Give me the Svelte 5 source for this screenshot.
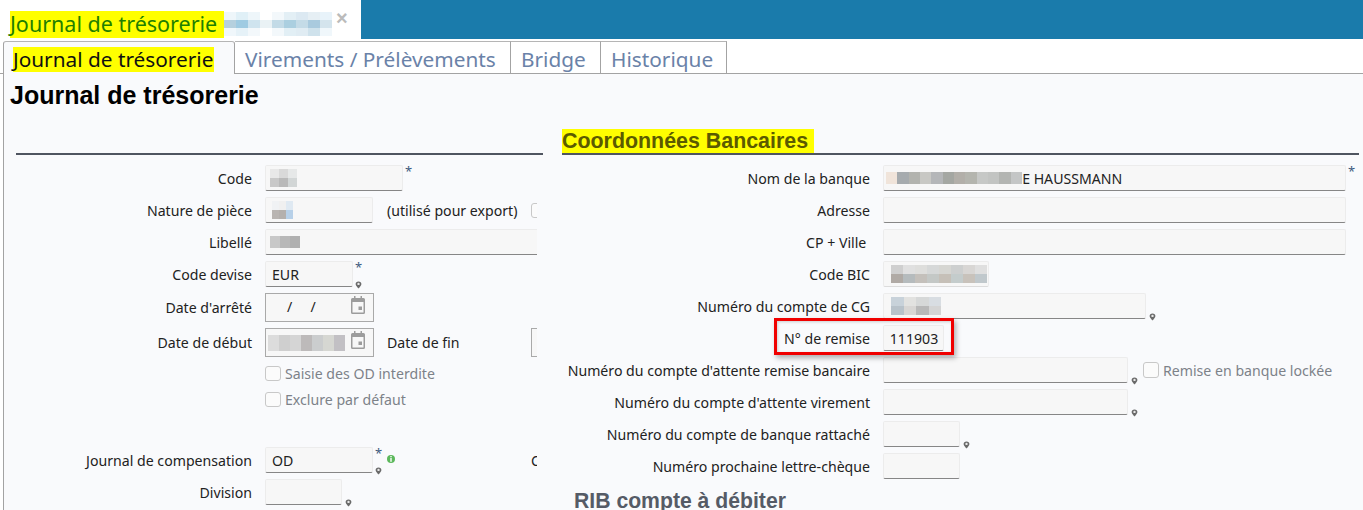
<script>
  const titleBlur = {
    cols: 9, w: 12, h: 8,
    c: ['#eef6fa','#e0f0f7','#eef6fa','#fff','#f3f8fb','#e3eff5','#dce9f2','#e6eff4','#e8f3fa',
        '#b5d0de','#9fcbe2','#cfe4ef','#eaf2f5','#c3dbe7','#abcfe0','#c4dbe7','#a9cade','#d4e4ed',
        '#f0f7fb','#e6f2f8','#f3f8fb','#fff','#f3f8fb','#e2eff5','#e0ecf3','#cfe2ec','#f0f7fb']
  };
  const codeBlur = { cols: 3, w: 9, h: 9, c: ['#e8e8e8','#d9d9d9','#e6e8e8','#c8c8c8','#b9b9b9','#d2d6d6'] };
  const natureBlur = { cols: 3, w: 7, h: 9, c: ['#f0f2f4','#f0f0f0','#dfe9f2','#b9b5b2','#b4b0ad','#b7d0e8'] };
  const libBlur = { cols: 3, w: 10, h: 12, c: ['#c8c8c8','#b8b8b8','#b0b0b0'] };
  const debutBlur = { cols: 7, w: 11, h: 16, c: ['#dcdcdc','#cfcfcf','#d5d5d5','#bdbaba','#cbcdce','#d6d7d2','#c2c0c4'] };
  const bankBlur = { cols: 12, w: 11.35, h: 12, c: ['#f0e4da','#a6abae','#b2b3ae','#c8c8c4','#b4b6b8','#a4a7a2','#b2afa9','#b4b5ae','#c6c8c6','#c2c4c2','#b3b5b2','#c4c6c6'] };
  const bicBlur = {
    cols: 8, w: 12, h: 9,
    c: ['#cfcfcf','#e0e0e0','#dededc','#d6d8d8','#d6d6d2','#cdcfcf','#d8d6d4','#dfdfdf',
        '#b0aaa5','#b5bbbd','#c4c0bb','#c4c8c6','#c6c0b8','#c4cccc','#c8c2bb','#c0c8cc']
  };
  const cgBlur = {
    cols: 4, w: 12.5, h: 9,
    c: ['#c8d2da','#e2e2e0','#d6d8d8','#d8dde2',
        '#b8c2ca','#d8d6d4','#b8b8b8','#d4d4d4']
  };

  const tabs = ['Virements / Prélèvements', 'Bridge', 'Historique'];
</script>

{#snippet blur(b)}
  <span class="blur" style="grid-template-columns: repeat({b.cols}, {b.w}px); grid-auto-rows: {b.h}px">
    {#each b.c as color}<i style="background: {color}"></i>{/each}
  </span>
{/snippet}

{#snippet pin()}
  <svg class="pin" width="7" height="8" viewBox="0 0 7 8" aria-hidden="true">
    <path d="M3.5 .4C1.7 .4.6 1.6.6 3c0 1.2 1.2 2.9 2.9 4.6C5.200 5.900 6.400 4.200 6.400 3 6.400 1.600 5.300.4 3.500.4Z" fill="#6a6a6a"/>
    <circle cx="3.500" cy="2.900" r="1.200" fill="#e8e8e8"/>
  </svg>
{/snippet}

{#snippet calendar()}
  <svg class="cal" width="14" height="18" viewBox="0 0 14 18" aria-hidden="true">
    <path d="M3 0h1.500v2h5V0H11v2h1.500A1.500 1.500 0 0 1 14 3.500v13a1.500 1.500 0 0 1-1.500 1.500h-11A1.500 1.500 0 0 1 0 16.500v-13A1.500 1.500 0 0 1 1.500 2H3Z" fill="#9c9c9c"/>
    <rect x="1.500" y="6" width="11" height="10.500" fill="#f7f7f7"/>
    <rect x="7.500" y="10.500" width="3.500" height="3.500" fill="#9c9c9c"/>
  </svg>
{/snippet}

<div class="page">
  <header class="topbar">
    <div class="doc">
      <span class="doc-title"><mark>Journal de trésorerie</mark></span>
      <span class="doc-blur">{@render blur(titleBlur)}</span>
      <span class="close">×</span>
    </div>
  </header>

  <nav class="tabs">
    <div class="tab active"><mark>Journal de trésorerie</mark></div>
    {#each tabs as t}<div class="tab">{t}</div>{/each}
  </nav>

  <main class="panel">
    <h1>Journal de trésorerie</h1>
    <div class="columns">
      <section class="col left">
        <h2 class="sec"></h2>
        <div class="rows">
          <div class="row">
            <label>Code</label>
            <span class="input w138">{@render blur(codeBlur)}</span>
            <span class="adorn"><b class="req">*</b></span>
          </div>
          <div class="row">
            <label>Nature de pièce</label>
            <span class="ctl"><span class="input w108">{@render blur(natureBlur)}</span></span>
            <span class="extra">(utilisé pour export)</span>
            <span class="check"></span>
          </div>
          <div class="row">
            <label>Libellé</label>
            <span class="input w300">{@render blur(libBlur)}</span>
          </div>
          <div class="row">
            <label>Code devise</label>
            <span class="input w88">EUR</span>
            <span class="adorn"><b class="req">*</b>{@render pin()}</span>
          </div>
          <div class="row tall">
            <label>Date d'arrêté</label>
            <span class="ctl"><span class="date"><span class="slashes">/&nbsp;&nbsp;&nbsp;&nbsp;&nbsp;/</span>{@render calendar()}</span></span>
          </div>
          <div class="row tall">
            <label>Date de début</label>
            <span class="ctl"><span class="date nopad">{@render blur(debutBlur)}{@render calendar()}</span></span>
            <span class="extra">Date de fin</span>
            <span class="date stub"></span>
          </div>
          <div class="row cb">
            <span class="spacer"></span>
            <span class="check"></span><span class="muted">Saisie des OD interdite</span>
          </div>
          <div class="row cb">
            <span class="spacer"></span>
            <span class="check"></span><span class="muted">Exclure par défaut</span>
          </div>
          <div class="row"></div>
          <div class="row">
            <label>Journal de compensation</label>
            <span class="ctl">
              <span class="input w108">OD</span>
              <span class="adorn"><b class="req">*</b>{@render pin()}</span>
              <svg class="info" width="8" height="8" viewBox="0 0 8 8" aria-hidden="true">
                <circle cx="4" cy="4" r="4" fill="#5cb85c"/>
                <rect x="3.300" y="1" width="1.400" height="1.300" fill="#fff"/>
                <rect x="3.300" y="3" width="1.400" height="3.800" fill="#fff"/>
              </svg>
            </span>
            <span class="extra"></span>
            <span class="stubtext">C</span>
          </div>
          <div class="row">
            <label>Division</label>
            <span class="input w77"></span>
            <span class="adorn pinonly">{@render pin()}</span>
          </div>
        </div>
      </section>

      <section class="col right">
        <h2 class="sec"><mark class="olive">Coordonnées Bancaires&nbsp;</mark></h2>
        <div class="rows">
          <div class="row">
            <label>Nom de la banque</label>
            <span class="input w463 bank">{@render blur(bankBlur)}<span>E HAUSSMANN</span></span>
            <span class="adorn"><b class="req">*</b></span>
          </div>
          <div class="row"><label>Adresse</label><span class="input w463"></span></div>
          <div class="row"><label>CP + Ville&nbsp;</label><span class="input w463"></span></div>
          <div class="row">
            <label>Code BIC</label>
            <span class="input w106 light">{@render blur(bicBlur)}</span>
          </div>
          <div class="row">
            <label>Numéro du compte de CG</label>
            <span class="input w263">{@render blur(cgBlur)}</span>
            <span class="adorn pinonly">{@render pin()}</span>
          </div>
          <div class="row remise">
            <label>N° de remise</label>
            <span class="input w61">111903</span>
            <span class="redbox"></span>
          </div>
          <div class="row">
            <label>Numéro du compte d'attente remise bancaire</label>
            <span class="input w245"></span>
            <span class="adorn pinonly">{@render pin()}</span>
            <span class="check lock"></span><span class="muted">Remise en banque lockée</span>
          </div>
          <div class="row">
            <label>Numéro du compte d'attente virement</label>
            <span class="input w245"></span>
            <span class="adorn pinonly">{@render pin()}</span>
          </div>
          <div class="row">
            <label>Numéro du compte de banque rattaché</label>
            <span class="input w77"></span>
            <span class="adorn pinonly">{@render pin()}</span>
          </div>
          <div class="row">
            <label>Numéro prochaine lettre-chèque</label>
            <span class="input w77"></span>
          </div>
        </div>
        <h3>RIB compte à débiter</h3>
      </section>
    </div>
  </main>
</div>

<style>
  :global(body) {
    margin: 0;
    background: #fff;
  }
  .page {
    width: 1363px;
    height: 510px;
    overflow: hidden;
    font-family: "Noto Sans", sans-serif;
    font-size: 14.13px;
    color: #222;
  }
  .topbar {
    height: 39px;
    background: #1a7bab;
    display: flex;
  }
  .doc {
    width: 361px;
    background: #fff;
    display: flex;
    align-items: flex-start;
    padding: 0 0 0 10px;
    box-sizing: border-box;
  }
  .doc-title {
    font-size: 21.5px;
    margin-top: 11px;
  }
  .doc-title mark {
    display: block;
    height: 27px;
    line-height: 25px;
    background: #ffff00;
    color: #1f8000;
    width: 214px;
    white-space: nowrap;
  }
  .doc-blur {
    display: block;
    margin-top: 12px;
  }
  .close {
    color: #bbb;
    font-family: "Liberation Sans", sans-serif;
    font-size: 20px;
    line-height: 22px;
    font-weight: bold;
    margin-left: 4px;
    margin-top: 7px;
  }
  .blur {
    display: inline-grid;
    flex: none;
    vertical-align: top;
  }
  .blur i {
    display: block;
  }
  .tabs {
    display: flex;
    margin-top: 2px;
    height: 32px;
    padding-left: 3px;
    border-bottom: 1px solid #a3a3a3;
  }
  .tab {
    box-sizing: border-box;
    height: 32px;
    border-top: 1px solid #b5b5b5;
    border-right: 1px solid #a3a3a3;
    padding: 0 10px;
    font-size: 20.8px;
    line-height: 34px;
    color: #6a82a8;
    white-space: nowrap;
  }
  .tabs .tab:nth-child(2) { width: 276px; }
  .tabs .tab:nth-child(3) { width: 90px; }
  .tabs .tab:nth-child(4) { width: 126px; }
  .tab.active {
    width: 232px;
    height: 33px;
    background: #f9fafc;
    border-left: 1px solid #a3a3a3;
    border-top-left-radius: 3px;
    border-top-right-radius: 3px;
    padding-left: 9px;
    color: #111;
    position: relative;
  }
  .tab.active mark {
    display: inline-block;
    background: #ffff00;
    color: #111;
    line-height: 25px;
    width: 201px;
  }
  .panel {
    margin-left: 3px;
    border-left: 1px solid #a3a3a3;
    background: #f9fafc;
    height: 436px;
    padding-left: 12px;
  }
  h1 {
    font-family: "Liberation Sans", sans-serif;
    font-size: 25px;
    line-height: 28px;
    font-weight: bold;
    color: #000;
    margin: 0 0 0 -6px;
    padding-top: 7px;
    height: 29px;
  }
  .columns {
    display: grid;
    grid-template-columns: 527px 797px;
    gap: 19px;
    margin-top: 19px;
  }
  .sec {
    height: 24px;
    margin: 0 0 7px;
    border-bottom: 2px solid #4f5560;
    font-family: "Liberation Sans", sans-serif;
    font-size: 21.4px;
    line-height: 24px;
    font-weight: bold;
  }
  mark.olive {
    display: inline-block;
    background: #ffff00;
    color: #5b5b00;
    height: 24px;
  }
  .row {
    display: flex;
    align-items: center;
    height: 32px;
    white-space: nowrap;
    position: relative;
  }
  .row.tall { height: 35px; }
  .row.cb { height: 26px; }
  .left .rows {
    width: 521px;
    overflow: hidden;
  }
  .left label, .left .spacer {
    flex: none;
    width: 236px;
    margin-right: 13px;
    text-align: right;
  }
  .right label {
    flex: none;
    width: 308px;
    margin-right: 13px;
    text-align: right;
  }
  .ctl {
    flex: none;
    width: 122px;
    display: flex;
    align-items: center;
    position: relative;
  }
  .extra {
    flex: none;
    width: 144px;
  }
  .input {
    flex: none;
    box-sizing: border-box;
    height: 26px;
    display: flex;
    align-items: center;
    padding-left: 6px;
    background: #f7f7f7;
    border: 1px solid #ececec;
    border-bottom-color: #868686;
    border-radius: 2px;
    color: #222;
  }
  .input.light { border-bottom-color: #dcdcdc; }
  .bank { padding-left: 2px; }
  .w61 { width: 61px; justify-content: center; padding: 0 0 0 1px; }
  .w77 { width: 77px; }
  .w88 { width: 88px; }
  .w106 { width: 106px; padding-left: 7px; }
  .w108 { width: 108px; }
  .w138 { width: 138px; padding-left: 4px; }
  .w245 { width: 245px; }
  .w263 { width: 263px; padding-left: 7px; }
  .w300 { width: 300px; padding-left: 4px; }
  .w463 { width: 463px; }
  .adorn {
    flex: none;
    height: 26px;
    width: 12px;
    margin-left: 2px;
    display: flex;
    flex-direction: column;
    justify-content: space-between;
    align-items: flex-start;
  }
  .adorn.pinonly {
    justify-content: flex-end;
    padding-left: 1px;
    width: 11px;
  }
  .req {
    color: #3d5a7e;
    font-weight: normal;
    font-size: 13px;
    line-height: 13px;
    height: 13px;
  }
  .pin {
    display: block;
    margin-bottom: -2px;
  }
  .info {
    flex: none;
    margin-top: -2px;
  }
  .date {
    flex: none;
    box-sizing: border-box;
    width: 109px;
    height: 29px;
    background: #f7f7f7;
    border: 1px solid #a9a9a9;
    display: flex;
    align-items: center;
    justify-content: space-between;
    padding: 0 8px 0 21px;
  }
  .date.nopad { padding-left: 2px; }
  .date.stub { width: 30px; padding: 0; }
  .slashes { line-height: 1; }
  .cal { margin-top: -5px; }
  .check {
    flex: none;
    box-sizing: border-box;
    width: 16px;
    height: 15px;
    border: 1px solid #c8c8c8;
    border-radius: 3px;
    background: #fbfbfb;
  }
  .check.lock {
    height: 16px;
    margin-left: 1px;
  }
  .muted {
    color: #7d8289;
    margin-left: 4px;
  }
  .stubtext { flex: none; }
  .remise { z-index: 1; }
  .redbox {
    position: absolute;
    left: 212px;
    top: -4px;
    width: 180px;
    height: 37px;
    box-sizing: border-box;
    border: 3px solid #f00000;
    box-shadow: 2px 3px 5px rgba(0, 0, 0, 0.3), inset 1px 1px 3px rgba(0, 0, 0, 0.18);
    pointer-events: none;
  }
  h3 {
    margin: 7px 0 0 12px;
    font-family: "Liberation Sans", sans-serif;
    font-size: 21.2px;
    line-height: 24px;
    font-weight: bold;
    color: #555b66;
  }
</style>
